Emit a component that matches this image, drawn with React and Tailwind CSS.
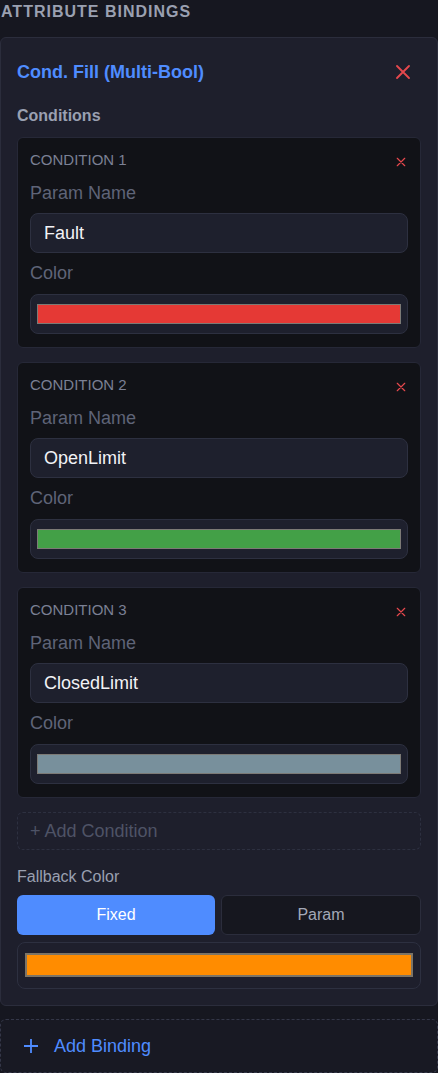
import React from "react";

const conditions = [
  { name: "Fault", color: "#e53935" },
  { name: "OpenLimit", color: "#43a047" },
  { name: "ClosedLimit", color: "#78909c" },
];

function CloseIcon({ size, className }) {
  return (
    <svg width={size} height={size} viewBox="0 0 12 12" className={className}>
      <path d="M1.5 1.5 L10.5 10.5 M10.5 1.5 L1.5 10.5" stroke="currentColor" strokeWidth="1.4" strokeLinecap="round" fill="none" />
    </svg>
  );
}

function ColorField({ color }) {
  return (
    <div className="h-10 rounded-lg border border-[#2d3040] bg-[#1e202d] px-[6px] pt-[9px]">
      <div className="h-5 border border-[#7c7a76]" style={{ backgroundColor: color }} />
    </div>
  );
}

function ConditionCard({ index, name, color }) {
  return (
    <div className="rounded-md border border-[#262837] bg-[#111217] p-3 h-[211px]">
      <div className="flex h-5 items-center justify-between">
        <span className="text-[15px] uppercase text-[#7b8094]">Condition {index}</span>
        <CloseIcon size={10} className="mr-[2px] mt-[3px] text-[#e5484d]" />
      </div>
      <div className="mt-[13px] h-5 text-[18px] leading-5 text-[#5f6478]">Param Name</div>
      <div className="mt-[10px] flex h-10 items-center rounded-lg border border-[#2d3040] bg-[#1e202d] px-[13px] text-[18px] text-[#f1f2f6]">
        {name}
      </div>
      <div className="mt-[10px] h-5 text-[18px] leading-5 text-[#5f6478]">Color</div>
      <div className="mt-[11px]">
        <ColorField color={color} />
      </div>
    </div>
  );
}

export default function App() {
  return (
    <div
      className="min-h-[1073px] w-[438px] overflow-hidden bg-[#161720]"
      style={{ fontFamily: '"Liberation Sans", Arial, sans-serif' }}
    >
      <div className="flex h-6 items-center pl-[1px] text-[16px] font-bold uppercase tracking-[1px] text-[#9aa0b1]">
        Attribute Bindings
      </div>

      <div className="mt-[13px] rounded-md border border-[#2b2d3c] bg-[#1e1f2c] px-4 pb-4 pt-4">
        <div className="flex h-9 items-center justify-between">
          <span className="text-[18px] font-bold text-[#4f8cff]">Cond. Fill (Multi-Bool)</span>
          <CloseIcon size={16} className="mr-[10px] text-[#e5484d]" />
        </div>

        <div className="mt-4 h-5 text-[16px] font-bold leading-5 text-[#9aa0b1]">Conditions</div>

        <div className="mt-[11px] flex flex-col gap-[14px]">
          {conditions.map((c, i) => (
            <ConditionCard key={c.name} index={i + 1} name={c.name} color={c.color} />
          ))}
        </div>

        <div className="mt-[14px] flex h-[38px] items-center rounded-md border border-dashed border-[#2d3040] px-3 text-[18px] text-[#4e5366]">
          + Add Condition
        </div>

        <div className="mt-[17px] h-5 text-[16px] leading-5 text-[#9aa0b1]">Fallback Color</div>

        <div className="mt-[8px] flex gap-[6px]">
          <button className="flex h-10 flex-1 items-center justify-center rounded-md bg-[#4f8cff] text-[16px] text-white">
            Fixed
          </button>
          <button className="flex h-10 flex-1 items-center justify-center rounded-md border border-[#2b2d3c] bg-[#16171f] text-[16px] text-[#a3a8b7]">
            Param
          </button>
        </div>

        <div className="mt-[7px] h-[47px] rounded-lg border border-[#2d3040] bg-[#1e1f2c] px-[7px] pt-[10px]">
          <div className="h-6 border-2 border-[#7c7466] bg-[#ff8c00]" />
        </div>
      </div>

      <div className="mt-[13px] flex h-[54px] items-center gap-[15px] rounded-md border border-dashed border-[#343748] bg-[#181923] pl-[22px] text-[18px] text-[#4f8cff]">
        <svg width="16" height="16" viewBox="0 0 16 16">
          <path d="M8 1 V15 M1 8 H15" stroke="currentColor" strokeWidth="1.8" fill="none" />
        </svg>
        <span>Add Binding</span>
      </div>
    </div>
  );
}
